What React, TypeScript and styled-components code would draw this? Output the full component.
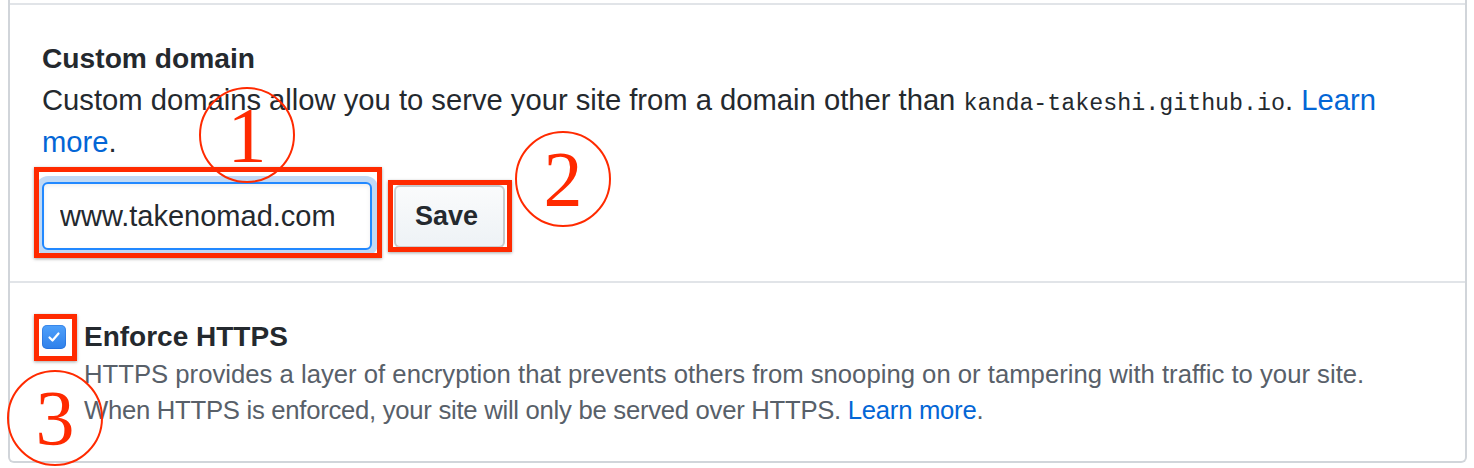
import React from "react";
import styled, { createGlobalStyle } from "styled-components";

const GlobalStyle = createGlobalStyle`
  html, body { margin: 0; padding: 0; background: #ffffff; }
  body { font-family: "Liberation Sans", Arial, sans-serif; color: #24292e; }
  * { box-sizing: border-box; }
`;

const Page = styled.div`
  position: relative;
  width: 1474px;
  height: 468px;
  padding: 0 7px 0 8px;
  overflow: hidden;
`;

const Box = styled.div`
  border: 2px solid #d1d5da;
  border-top: none;
  border-radius: 0 0 6px 6px;
  padding-top: 3px;
`;

const Section = styled.section<{ $pt: number; $pb: number }>`
  border-top: 2px solid #e1e4e8;
  padding: ${(p) => p.$pt}px 32px ${(p) => p.$pb}px 32px;
`;

const Heading = styled.h3`
  margin: 0;
  font-size: 28.2px;
  line-height: 42px;
  font-weight: 700;
  color: #24292e;
`;

const Para = styled.p`
  margin: 0;
  font-size: 29.2px;
  line-height: 42px;
  color: #24292e;
`;

const Code = styled.code`
  font-family: "Liberation Mono", "DejaVu Sans Mono", monospace;
  font-size: 23.3px;
  line-height: 1;
  color: #24292e;
`;

const Link = styled.a`
  color: #0366d6;
  text-decoration: none;
`;

const FormRow = styled.div`
  display: flex;
  align-items: center;
  gap: 22px;
  margin-top: 19px;
`;

const Marked = styled.div`
  position: relative;
  display: flex;
`;

const RedMark = styled.span<{ $t: number; $r: number; $b: number; $l: number }>`
  position: absolute;
  top: ${(p) => p.$t}px;
  right: ${(p) => p.$r}px;
  bottom: ${(p) => p.$b}px;
  left: ${(p) => p.$l}px;
  border: 5px solid #ff2a00;
  box-shadow: 0 1px 3px rgba(0, 0, 0, 0.35);
  pointer-events: none;
`;

const TextInput = styled.input`
  width: 330px;
  height: 68px;
  padding: 0 16px;
  border: 2px solid #2188ff;
  border-radius: 6px;
  outline: none;
  box-shadow: inset 0 2px 4px rgba(27, 31, 35, 0.075), 0 0 0 6px rgba(3, 102, 214, 0.25);
  font-family: "Liberation Sans", Arial, sans-serif;
  font-size: 29px;
  color: #24292e;
  background: #fff;
`;

const Button = styled.button`
  width: 111px;
  height: 63px;
  border: 2px solid rgba(27, 31, 35, 0.2);
  border-radius: 6px;
  background: linear-gradient(-180deg, #fafbfc 0%, #eff3f6 90%);
  font-family: "Liberation Sans", Arial, sans-serif;
  font-size: 27px;
  font-weight: 700;
  color: #24292e;
  padding: 0 6px 0 0;
`;

const CheckRow = styled.div`
  display: flex;
  align-items: center;
  gap: 18px;
`;

const CheckBox = styled.span`
  width: 24px;
  height: 24px;
  border-radius: 5px;
  background: linear-gradient(180deg, #4fa1fb 0%, #2f80ea 100%);
  box-shadow: inset 0 0 0 1px rgba(20, 90, 200, 0.35);
  display: flex;
  align-items: center;
  justify-content: center;
`;

const Label = styled.span`
  font-size: 28px;
  font-weight: 700;
  line-height: 38px;
  color: #24292e;
`;

const Note = styled.p`
  margin: 0;
  padding-left: 42px;
  font-size: 25.7px;
  line-height: 36px;
  color: #586069;
`;

const Tight = styled.span`
  letter-spacing: -0.28px;
`;

const Circled = styled.div<{ $x: number; $y: number }>`
  position: absolute;
  left: ${(p) => p.$x}px;
  top: ${(p) => p.$y}px;
  width: 96px;
  height: 96px;
  border: 2.5px solid #ff2a00;
  border-radius: 50%;
  display: flex;
  align-items: center;
  justify-content: center;
  font-family: "Liberation Serif", "Times New Roman", serif;
  font-size: 78px;
  line-height: 1;
  color: #ff2a00;
  pointer-events: none;
`;

export default function App() {
  return (
    <>
      <GlobalStyle />
      <Page>
        <Box>
          <Section $pt={32} $pb={31}>
            <Heading>Custom domain</Heading>
            <Para>
              Custom domains allow you to serve your site from a domain other than{" "}
              <Code>kanda-takeshi.github.io</Code>. <Link href="#">Learn more</Link>.
            </Para>
            <FormRow>
              <Marked>
                <TextInput defaultValue="www.takenomad.com" readOnly />
                <RedMark $t={-15} $r={-10} $b={-8} $l={-8} />
              </Marked>
              <Marked>
                <Button type="button">Save</Button>
                <RedMark $t={-5} $r={-7} $b={-4} $l={-6} />
              </Marked>
            </FormRow>
          </Section>
          <Section $pt={35} $pb={33}>
            <CheckRow>
              <Marked>
                <CheckBox>
                  <svg width="16" height="16" viewBox="0 0 16 16">
                    <polyline
                      points="3.5,8.5 6.5,11.5 12.5,4.5"
                      fill="none"
                      stroke="#ffffff"
                      strokeWidth="2.2"
                      strokeLinecap="round"
                      strokeLinejoin="round"
                    />
                  </svg>
                </CheckBox>
                <RedMark $t={-11} $r={-11} $b={-12} $l={-8} />
              </Marked>
              <Label>Enforce HTTPS</Label>
            </CheckRow>
            <Note>
              HTTPS provides a layer of encryption that prevents others from snooping on or tampering with traffic to your site.
              <br />
              <Tight>
                When HTTPS is enforced, your site will only be served over HTTPS. <Link href="#">Learn more</Link>.
              </Tight>
            </Note>
          </Section>
        </Box>
        <Circled $x={199} $y={87}>1</Circled>
        <Circled $x={515} $y={131}>2</Circled>
        <Circled $x={7} $y={370}>3</Circled>
      </Page>
    </>
  );
}
